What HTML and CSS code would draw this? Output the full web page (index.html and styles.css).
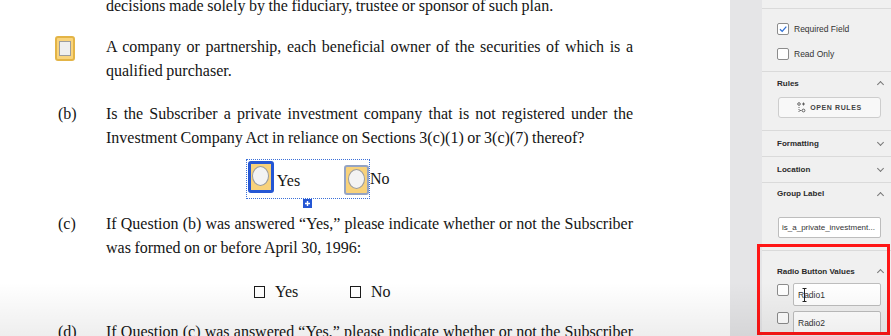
FILE: index.html
```html
<!DOCTYPE html>
<html lang="en">
<head>
  <meta charset="UTF-8" />
  <title>Form editor</title>
  <link rel="stylesheet" href="styles.css">
</head>
<body>
<div class="screen">

  <main class="doc">
    <div class="para p-first">
      <div class="mark"></div>
      <div class="text">
        <span class="ln last">decisions made solely by the fiduciary, trustee or sponsor of such plan.</span>
      </div>
    </div>

    <div class="para p-a">
      <div class="mark mark-box"><span class="field-check"><span></span></span></div>
      <div class="text">
        <span class="ln">A company or partnership, each beneficial owner of the securities of which is a</span>
        <span class="ln last">qualified purchaser.</span>
      </div>
    </div>

    <div class="para p-b">
      <div class="mark">(b)</div>
      <div class="text">
        <span class="ln">Is the Subscriber a private investment company that is not registered under the</span>
        <span class="ln last">Investment Company Act in reliance on Sections 3(c)(1) or 3(c)(7) thereof?</span>
      </div>
    </div>

    <div class="radio-row">
      <div class="radio-group">
        <span class="radio-field selected"><span class="dot"></span></span>
        <span class="radio-label">Yes</span>
        <span class="radio-field other"><span class="dot"></span></span>
        <span class="add-btn">
          <svg width="9" height="9" viewBox="0 0 9 9"><path d="M4.5 2v5M2 4.5h5" stroke="#fff" stroke-width="1.4"/></svg>
        </span>
      </div>
      <span class="radio-label">No</span>
    </div>

    <div class="para p-c">
      <div class="mark">(c)</div>
      <div class="text">
        <span class="ln">If Question (b) was answered “Yes,” please indicate whether or not the Subscriber</span>
        <span class="ln last">was formed on or before April 30, 1996:</span>
      </div>
    </div>

    <div class="choice-row">
      <span class="box"></span><span class="choice">Yes</span>
      <span class="box"></span><span class="choice">No</span>
    </div>

    <div class="para p-d">
      <div class="mark">(d)</div>
      <div class="text">
        <span class="ln">If Question (c) was answered “Yes,” please indicate whether or not the Subscriber</span>
      </div>
    </div>
  </main>

  <div class="gutter"></div>

  <aside class="panel">
    <div class="panel-top"></div>

    <div class="section props">
      <label class="check-row">
        <span class="cb checked">
          <svg width="10" height="10" viewBox="0 0 10 10"><path d="M2 5.2l2.2 2.2L8.3 2.6" fill="none" stroke="#2f6fd4" stroke-width="1.3"/></svg>
        </span>
        Required Field
      </label>
      <label class="check-row"><span class="cb"></span>Read Only</label>
    </div>

    <div class="section rules">
      <div class="section-head">Rules <span class="caret up"></span></div>
      <button class="rules-btn">
        <svg width="9" height="11" viewBox="0 0 9 11">
          <circle cx="2" cy="2" r="1.3" fill="none" stroke="#555" stroke-width="0.9"/>
          <path d="M6.5 0.5v3M5 2h3" stroke="#555" stroke-width="0.9"/>
          <path d="M2 5v1M2 7v1M2 9v1" stroke="#555" stroke-width="0.9"/>
          <path d="M2.5 8.5h2" stroke="#555" stroke-width="0.9"/>
          <circle cx="6.5" cy="8.5" r="1.4" fill="none" stroke="#555" stroke-width="0.9"/>
        </svg>
        OPEN RULES
      </button>
    </div>

    <div class="section closed">
      <div class="section-head">Formatting <span class="caret down"></span></div>
    </div>

    <div class="section closed">
      <div class="section-head">Location <span class="caret down"></span></div>
    </div>

    <div class="section group-label">
      <div class="section-head">Group Label <span class="caret up"></span></div>
      <div class="text-input wide">is_a_private_investment...</div>
    </div>

    <div class="section values">
      <div class="section-head">Radio Button Values <span class="caret up"></span></div>
      <div class="value-row">
        <span class="cb"></span>
        <div class="text-input">Radio1
          <svg class="ibeam" width="5" height="14" viewBox="0 0 5 14"><path d="M0.5 0.5h4M2.5 0.5v13M0.5 13.5h4" stroke="#222" stroke-width="1"/></svg>
        </div>
      </div>
      <div class="value-row">
        <span class="cb"></span>
        <div class="text-input">Radio2</div>
      </div>
    </div>
  </aside>

  <div class="highlight"></div>
  <div class="fade"></div>
</div>
</body>
</html>
```

FILE: styles.css
```css
body {
  margin: 0;
  font-family: "Liberation Serif", "Times New Roman", serif;
  background-color: #fff;
}

.screen {
  display: flex;
  width: 891px;
  height: 336px;
  overflow: hidden;
  position: relative;
  background-color: #fff;
}

/* document page */

.doc {
  width: 730px;
  flex: none;
  color: #141414;
  font-size: 16px;
  line-height: 24px;
}

.para {
  display: flex;
}

.mark {
  width: 106px;
  flex: none;
  box-sizing: border-box;
  padding-left: 58px;
}

.text {
  width: 527px;
}

.ln {
  display: block;
  text-align: justify;
  text-align-last: justify;
  word-spacing: -0.5px;
}

.ln.last {
  text-align-last: left;
}

.p-first { margin-top: -6px; }
.p-a { margin-top: 17px; }
.p-b { margin-top: 19px; }
.p-c { margin-top: 13px; }
.p-d { margin-top: 16px; }

.mark-box {
  padding-left: 55px;
  padding-top: 1px;
}

.field-check {
  display: flex;
  align-items: center;
  justify-content: center;
  width: 20px;
  height: 25px;
  box-sizing: border-box;
  border: 2px solid #e3b446;
  border-radius: 3px;
  background-color: #f9d47c;
}

.field-check span {
  width: 10px;
  height: 13px;
  background-color: #efefef;
  border: 1px solid #9d9d9d;
}

.radio-row {
  display: flex;
  align-items: center;
  margin-top: 9px;
  padding-left: 246px;
}

.radio-group {
  position: relative;
  display: flex;
  align-items: flex-start;
  height: 40px;
  box-sizing: border-box;
  width: 124px;
  padding: 1px 0 0 1px;
  border: 1.5px dotted #3c70d8;
}

.radio-field {
  display: flex;
  justify-content: center;
  box-sizing: border-box;
  border-radius: 3px;
  background-color: #f8d27b;
}

.radio-field.selected {
  width: 26px;
  height: 32px;
  border: 3px solid #2456d4;
}

.radio-field.other {
  width: 25px;
  height: 30px;
  margin-top: 4px;
  margin-left: 44px;
  border: 2px solid #94a3c3;
}

.dot {
  width: 17px;
  height: 20px;
  margin-top: 2px;
  box-sizing: border-box;
  border-radius: 50%;
  background-color: #f3f3f3;
  border: 1px solid #9a9a9a;
}

.radio-group .radio-label {
  margin: 8px 0 0 3px;
}

.radio-label {
  font-size: 16px;
}

.add-btn {
  position: absolute;
  left: 56px;
  bottom: -10px;
  width: 9px;
  height: 9px;
  background-color: #2456d4;
  display: flex;
}

.choice-row {
  display: flex;
  align-items: center;
  margin-top: 20px;
  padding-left: 254px;
  height: 24px;
}

.box {
  width: 11px;
  height: 12px;
  box-sizing: border-box;
  border: 1.5px solid #1a1a1a;
}

.choice {
  margin-left: 10px;
  width: 75px;
}

/* side panel */

.gutter {
  width: 32px;
  flex: none;
  background-color: #e5e5e7;
}

.panel {
  width: 129px;
  flex: none;
  background-color: #f0f0f0;
  font-family: "Liberation Sans", Arial, sans-serif;
  font-size: 8.5px;
  color: #333;
}

.panel-top {
  height: 8px;
  border-bottom: 1px solid #dadada;
}

.section {
  padding: 0 6px 0 15px;
  border-bottom: 1px solid #dadada;
}

.section-head {
  display: flex;
  align-items: center;
  justify-content: space-between;
  height: 22px;
  font-size: 8px;
  font-weight: bold;
  color: #2a2a2a;
}

.caret {
  width: 4px;
  height: 4px;
  border-left: 1px solid #777;
  border-top: 1px solid #777;
  margin-right: 2px;
}

.caret.up {
  transform: rotate(45deg);
  margin-top: 3px;
}

.caret.down {
  transform: rotate(225deg);
  margin-top: -3px;
}

.props {
  display: flex;
  flex-direction: column;
  gap: 13px;
  padding-top: 14px;
  padding-bottom: 11px;
}

.check-row {
  display: flex;
  align-items: center;
  gap: 5px;
  height: 12px;
}

.cb {
  display: flex;
  align-items: center;
  justify-content: center;
  width: 12px;
  height: 12px;
  flex: none;
  box-sizing: border-box;
  background-color: #fff;
  border: 1px solid #8c8c8c;
  border-radius: 2px;
}

.rules {
  padding-bottom: 12px;
}

.rules-btn {
  display: flex;
  align-items: center;
  justify-content: center;
  gap: 4px;
  width: 103px;
  height: 21px;
  margin-top: 3px;
  margin-left: 1px;
  padding: 0;
  background-color: #f8f8f8;
  border: 1px solid #cdcdcd;
  border-radius: 3px;
  font-family: "Liberation Sans", Arial, sans-serif;
  font-size: 7px;
  font-weight: bold;
  letter-spacing: 0.6px;
  color: #444;
}

.closed .section-head {
  height: 25px;
}

.group-label {
  padding-bottom: 12px;
}

.group-label .section-head {
  height: 21px;
}

.text-input {
  position: relative;
  display: flex;
  align-items: center;
  height: 23px;
  box-sizing: border-box;
  padding: 0 4px;
  background-color: #fff;
  border: 1px solid #bdbdbd;
  border-radius: 2px;
  color: #333;
  white-space: nowrap;
  overflow: hidden;
}

.text-input.wide {
  width: 103px;
  height: 21px;
  margin-top: 13px;
  margin-left: 1px;
  padding: 0 3px;
  font-size: 8px;
}

.values {
  padding-top: 8px;
  border-bottom: none;
}

.values .section-head {
  height: 24px;
}

.value-row {
  display: flex;
  align-items: flex-start;
  gap: 4px;
  margin-bottom: 5px;
}

.value-row .cb {
  margin-top: 1px;
}

.value-row .text-input {
  width: 88px;
}

.ibeam {
  position: absolute;
  left: 8px;
  top: 4px;
}

/* overlays */

.highlight {
  position: absolute;
  left: 757px;
  top: 244px;
  right: 1px;
  bottom: 1px;
  border: 3px solid #ff1616;
  pointer-events: none;
}

.fade {
  position: absolute;
  left: 0;
  right: 0;
  top: 282px;
  bottom: 0;
  background: linear-gradient(to bottom, rgba(0, 0, 0, 0), rgba(0, 0, 0, 0.065));
  pointer-events: none;
}
```
